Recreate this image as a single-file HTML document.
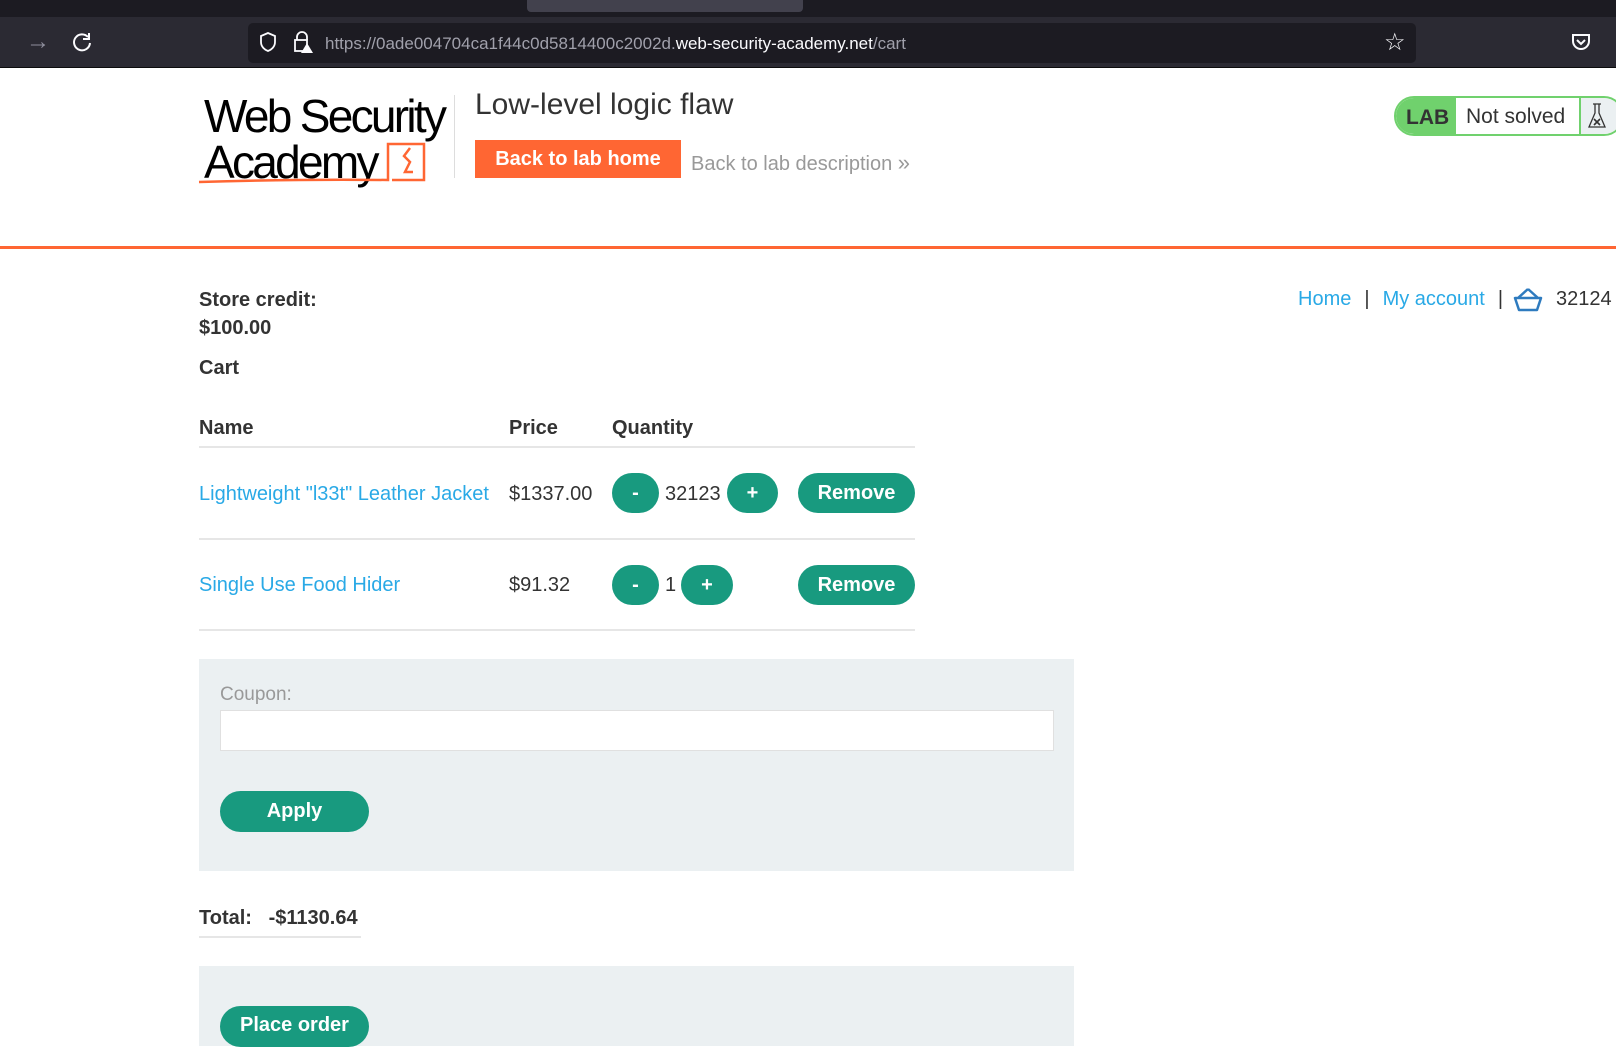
<!DOCTYPE html>
<html><head><meta charset="utf-8"><style>
*{margin:0;padding:0;box-sizing:border-box}
body{width:1616px;height:1037px;overflow:hidden;background:#fff;font-family:"Liberation Sans",Arial,sans-serif;color:#333;position:relative}
.a{position:absolute;white-space:nowrap}
.btn{position:absolute;background:#189a7f;color:#fff;font-weight:bold;font-size:20px;border-radius:22px;display:flex;align-items:center;justify-content:center}
.link{color:#29a9e6}
.hr{position:absolute;height:2px;background:#e6e6e6}
</style></head><body>
<div class="a" style="left:0;top:0;width:1616px;height:17px;background:#1c1b22"></div>
<div class="a" style="left:527px;top:0;width:276px;height:12px;background:#42414d;border-radius:0 0 4px 4px"></div>
<div class="a" style="left:0;top:17px;width:1616px;height:51px;background:#2b2a33;border-bottom:1px solid #0c0c0d"></div>
<div class="a" style="left:26px;top:28px;color:#8f8f9d;font-size:24px">→</div>
<svg class="a" style="left:71px;top:31px" width="22" height="22" viewBox="0 0 22 22"><path d="M17 6A8 8 0 1 0 19 12" fill="none" stroke="#fbfbfe" stroke-width="2"/><path d="M18 2v6h-6" fill="none" stroke="#fbfbfe" stroke-width="2"/></svg>
<div class="a" style="left:248px;top:23px;width:1168px;height:40px;background:#1c1b22;border-radius:5px"></div>
<svg class="a" style="left:258px;top:31px" width="20" height="22" viewBox="0 0 20 22"><path d="M10 2L3 5v6c0 5 4 8 7 9 3-1 7-4 7-9V5z" fill="none" stroke="#fbfbfe" stroke-width="1.8"/></svg>
<svg class="a" style="left:292px;top:30px" width="22" height="24" viewBox="0 0 22 24"><path d="M5 10V7a5 5 0 0 1 10 0v3" fill="none" stroke="#fbfbfe" stroke-width="1.8"/><rect x="3" y="10" width="12" height="11" fill="none" stroke="#fbfbfe" stroke-width="1.8"/><path d="M15 13l6 10H9z" fill="#fbfbfe"/></svg>
<div class="a" style="left:325px;top:34px;font-size:17px;color:#a0a0ab">https://0ade004704ca1f44c0d5814400c2002d.<span style="color:#fbfbfe">web-security-academy.net</span>/cart</div>
<div class="a" style="left:1384px;top:28px;color:#fbfbfe;font-size:24px">☆</div>
<svg class="a" style="left:1570px;top:32px" width="22" height="20" viewBox="0 0 22 20"><path d="M3 3h16v6a8 8 0 0 1-16 0z" fill="none" stroke="#fbfbfe" stroke-width="2"/><path d="M7 8l4 4 4-4" fill="none" stroke="#fbfbfe" stroke-width="2"/></svg>
<div class="a" style="left:204px;top:93px;font-size:46px;letter-spacing:-2.7px;color:#000;line-height:46px">Web Security<br>Academy</div>
<svg class="a" style="left:198px;top:140px" width="230" height="48" viewBox="0 0 230 48"><path d="M1 42Q100 39 190 40V4h36v36h-32" fill="none" stroke="#ff6633" stroke-width="2.5"/><path d="M212 8l-6 8 6 6-5 10 8 0" fill="none" stroke="#ff6633" stroke-width="2.5"/></svg>
<div class="a" style="left:454px;top:95px;width:1px;height:83px;background:#ddd"></div>
<div class="a" style="left:475px;top:88px;font-size:30px;color:#333">Low-level logic flaw</div>
<div class="a" style="left:475px;top:140px;width:206px;height:38px;background:#ff6633;color:#fff;font-weight:bold;font-size:20px;display:flex;align-items:center;justify-content:center">Back to lab home</div>
<div class="a" style="left:691px;top:150px;font-size:20px;color:#999">Back to lab description <span style="font-size:22px">»</span></div>
<div class="a" style="left:1394px;top:96px;width:230px;height:40px;border:2px solid #70d16d;border-radius:20px;overflow:hidden;background:#fff">
<div class="a" style="left:0;top:0;width:60px;height:40px;background:#70d16d;font-weight:bold;font-size:21px;color:#333;padding:8px 0 0 10px">LAB</div>
<div class="a" style="left:70px;top:7px;font-size:21px;color:#333">Not solved</div>
<div class="a" style="left:183px;top:0;width:50px;height:40px;background:#ebf0f2;border-left:2px solid #70d16d"></div>
</div>
<svg class="a" style="left:1586px;top:101px" width="22" height="30" viewBox="0 0 22 30"><path d="M7 3h8M9 3v9L3 26h16L13 12V3" fill="none" stroke="#333" stroke-width="1.3"/><path d="M8 18l6 6M14 18l-6 6" stroke="#333" stroke-width="1.6"/></svg>
<div class="a" style="left:0;top:246px;width:1616px;height:3px;background:#ff6633"></div>
<div class="a" style="left:1298px;top:288px;font-size:20px"><span class="link">Home</span><span style="margin:0 13px">|</span><span class="link">My account</span><span style="margin:0 13px">|</span></div>
<svg class="a" style="left:1513px;top:287px" width="30" height="25" viewBox="0 0 30 25"><path d="M15 2L5 11M15 2l10 9M2 11h26l-4 12H6z" fill="none" stroke="#2e7bbf" stroke-width="2.5" stroke-linejoin="round"/></svg>
<div class="a" style="left:1556px;top:288px;font-size:20px">32124</div>
<div class="a" style="left:199px;top:286px;font-size:20px;font-weight:bold;line-height:28px">Store credit:<br>$100.00</div>
<div class="a" style="left:199px;top:357px;font-size:20px;font-weight:bold">Cart</div>
<div class="a" style="left:199px;top:417px;font-size:20px;font-weight:bold">Name</div>
<div class="a" style="left:509px;top:417px;font-size:20px;font-weight:bold">Price</div>
<div class="a" style="left:612px;top:417px;font-size:20px;font-weight:bold">Quantity</div>
<div class="hr" style="left:199px;top:446px;width:716px"></div>
<div class="a link" style="left:199px;top:483px;font-size:20px">Lightweight "l33t" Leather Jacket</div>
<div class="a" style="left:509px;top:483px;font-size:20px">$1337.00</div>
<div class="btn" style="left:612px;top:473px;width:47px;height:40px">-</div>
<div class="a" style="left:665px;top:483px;font-size:20px">32123</div>
<div class="btn" style="left:727px;top:473px;width:51px;height:40px">+</div>
<div class="btn" style="left:798px;top:473px;width:117px;height:40px">Remove</div>
<div class="hr" style="left:199px;top:538px;width:716px"></div>
<div class="a link" style="left:199px;top:574px;font-size:20px">Single Use Food Hider</div>
<div class="a" style="left:509px;top:574px;font-size:20px">$91.32</div>
<div class="btn" style="left:612px;top:565px;width:47px;height:40px">-</div>
<div class="a" style="left:665px;top:574px;font-size:20px">1</div>
<div class="btn" style="left:681px;top:565px;width:52px;height:40px">+</div>
<div class="btn" style="left:798px;top:565px;width:117px;height:40px">Remove</div>
<div class="hr" style="left:199px;top:629px;width:716px"></div>
<div class="a" style="left:199px;top:659px;width:875px;height:212px;background:#ebf0f2"></div>
<div class="a" style="left:220px;top:684px;font-size:19px;color:#999">Coupon:</div>
<div class="a" style="left:220px;top:710px;width:834px;height:41px;background:#fff;border:1px solid #e0e0e0"></div>
<div class="btn" style="left:220px;top:791px;width:149px;height:41px">Apply</div>
<div class="a" style="left:199px;top:907px;font-size:20px;font-weight:bold">Total:&nbsp;&nbsp;&nbsp;-$1130.64</div>
<div class="hr" style="left:199px;top:936px;width:162px"></div>
<div class="a" style="left:199px;top:966px;width:875px;height:80px;background:#ebf0f2"></div>
<div class="btn" style="left:220px;top:1006px;width:149px;height:41px;padding-bottom:2px">Place order</div>
</body></html>
